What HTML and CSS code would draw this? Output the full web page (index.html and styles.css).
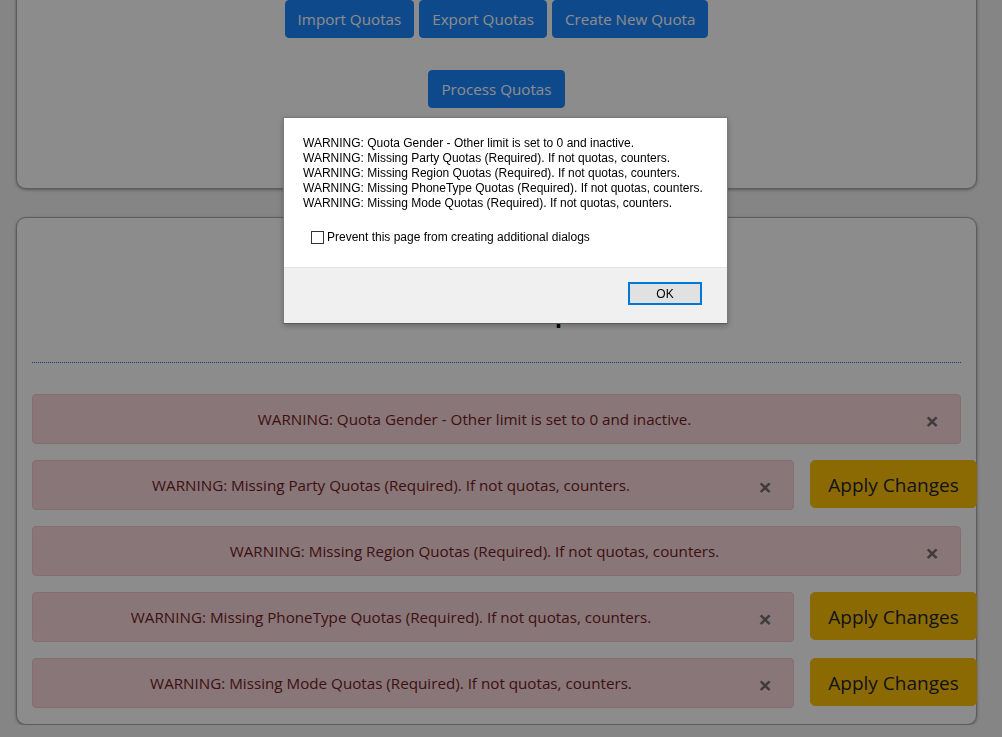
FILE: index.html
```html
<!DOCTYPE html>
<html lang="en">
<head>
<meta charset="utf-8">
<title>Quotas</title>
<link rel="stylesheet" href="styles.css">
</head>
<body>
<div class="page">
  <section class="card card-actions">
    <div class="btn-line">
      <button class="btn btn-primary">Import Quotas</button>
      <button class="btn btn-primary">Export Quotas</button>
      <button class="btn btn-primary">Create New Quota</button>
    </div>
    <div class="btn-line">
      <button class="btn btn-primary">Process Quotas</button>
    </div>
  </section>

  <section class="card card-warnings">
    <h2 class="card-title">Mode Setup</h2>
    <div class="divider"></div>

    <div class="warn-row">
      <div class="alert">WARNING: Quota Gender - Other limit is set to 0 and inactive.<span class="close">&times;</span></div>
    </div>
    <div class="warn-row with-action">
      <div class="alert">WARNING: Missing Party Quotas (Required). If not quotas, counters.<span class="close">&times;</span></div>
      <button class="btn btn-warning">Apply Changes</button>
    </div>
    <div class="warn-row">
      <div class="alert">WARNING: Missing Region Quotas (Required). If not quotas, counters.<span class="close">&times;</span></div>
    </div>
    <div class="warn-row with-action">
      <div class="alert">WARNING: Missing PhoneType Quotas (Required). If not quotas, counters.<span class="close">&times;</span></div>
      <button class="btn btn-warning">Apply Changes</button>
    </div>
    <div class="warn-row with-action">
      <div class="alert">WARNING: Missing Mode Quotas (Required). If not quotas, counters.<span class="close">&times;</span></div>
      <button class="btn btn-warning">Apply Changes</button>
    </div>
  </section>
</div>

<div class="overlay"></div>

<div class="dialog">
  <div class="dialog-body">
    <div class="dialog-msg">
      <div>WARNING: Quota Gender - Other limit is set to 0 and inactive.</div>
      <div>WARNING: Missing Party Quotas (Required). If not quotas, counters.</div>
      <div>WARNING: Missing Region Quotas (Required). If not quotas, counters.</div>
      <div>WARNING: Missing PhoneType Quotas (Required). If not quotas, counters.</div>
      <div>WARNING: Missing Mode Quotas (Required). If not quotas, counters.</div>
    </div>
    <label class="dialog-check"><span class="checkbox"></span>Prevent this page from creating additional dialogs</label>
  </div>
  <div class="dialog-footer">
    <button class="dialog-ok">OK</button>
  </div>
</div>
</body>
</html>
```

FILE: styles.css
```css
* { box-sizing: border-box; }

html, body {
  margin: 0;
  padding: 0;
  overflow: hidden;
}

body {
  background: #f2f2f2;
  font-family: "Open Sans", "Noto Sans", sans-serif;
  font-size: 15.2px;
  line-height: 24px;
  color: #212529;
}

.page {
  width: 961px;
  margin-left: 16px;
  margin-top: -40px;
}

.card {
  background: #ffffff;
  border: 1px solid #a8a8a8;
  border-radius: 10px;
  box-shadow: 0 1px 3px rgba(0, 0, 0, 0.35);
}

.card-actions {
  padding: 39px 15px 80px;
  display: flex;
  flex-direction: column;
  align-items: center;
  gap: 32px;
}

.btn-line {
  display: flex;
  justify-content: center;
  gap: 5px;
}

.btn {
  font-family: inherit;
  font-size: 15.2px;
  line-height: 24px;
  padding: 6px 12px;
  border: 1px solid transparent;
  border-radius: 4px;
  cursor: pointer;
}

.btn-primary {
  background: #1a86ff;
  border-color: #1a86ff;
  color: #ffffff;
}

.card-warnings {
  margin-top: 28px;
  padding: 0 15px;
}

.card-title {
  margin: 0;
  height: 144px;
  padding: 68px 20px 0 0;
  text-align: center;
  font-size: 30px;
  font-weight: 600;
  line-height: 48px;
  color: #111111;
}

.divider {
  border-top: 1px dotted #2a6fd6;
  margin-bottom: 31px;
}

.warn-row {
  display: flex;
  gap: 16px;
  margin-bottom: 16px;
  align-items: flex-start;
}

.warn-row.with-action {
  margin-right: -16px;
}

.alert {
  position: relative;
  flex: 1;
  padding: 12px 64px 12px 20px;
  background: #f8d7da;
  border: 1px solid #f5c6cb;
  border-radius: 4px;
  color: #721c24;
  text-align: center;
  line-height: 24px;
}

.close {
  position: absolute;
  top: 0;
  right: 0;
  padding: 14px 21px 10px 20px;
  font-size: 24px;
  font-weight: 700;
  line-height: 1;
  color: #000;
  opacity: 0.5;
  text-shadow: 0 1px 0 #fff;
}

.btn-warning {
  flex: none;
  width: 167px;
  font-size: 19px;
  line-height: 30px;
  padding: 9px 10px 7px;
  border-radius: 5px;
  background: #ffc107;
  border-color: #ffc107;
  color: #212529;
}

.overlay {
  position: fixed;
  inset: 0;
  background: rgba(0, 0, 0, 0.45);
}

.dialog {
  position: fixed;
  left: 283px;
  top: 117px;
  width: 445px;
  height: 207px;
  background: #ffffff;
  border: 1px solid #7a7a7a;
  border-bottom-color: #5a5a5a;
  font-family: "Liberation Sans", Arial, sans-serif;
  font-size: 12px;
  line-height: 15px;
  color: #000;
  display: flex;
  flex-direction: column;
  box-shadow: 0 2px 6px rgba(0, 0, 0, 0.25);
}

.dialog-body {
  flex: 1;
  padding: 18px 19px 0;
}

.dialog-check {
  display: flex;
  align-items: center;
  gap: 3px;
  margin-top: 19px;
  margin-left: 8px;
}

.checkbox {
  width: 13px;
  height: 13px;
  border: 1px solid #333333;
  background: #ffffff;
}

.dialog-footer {
  height: 56px;
  background: #f0f0f0;
  border-top: 1px solid #e3e3e3;
  display: flex;
  justify-content: flex-end;
  padding: 14px 25px 0 0;
}

.dialog-ok {
  width: 74px;
  height: 23px;
  background: #e1e1e1;
  border: 2px solid #0078d7;
  font-family: "Liberation Sans", Arial, sans-serif;
  font-size: 12px;
  color: #000;
  padding: 0;
}
```
